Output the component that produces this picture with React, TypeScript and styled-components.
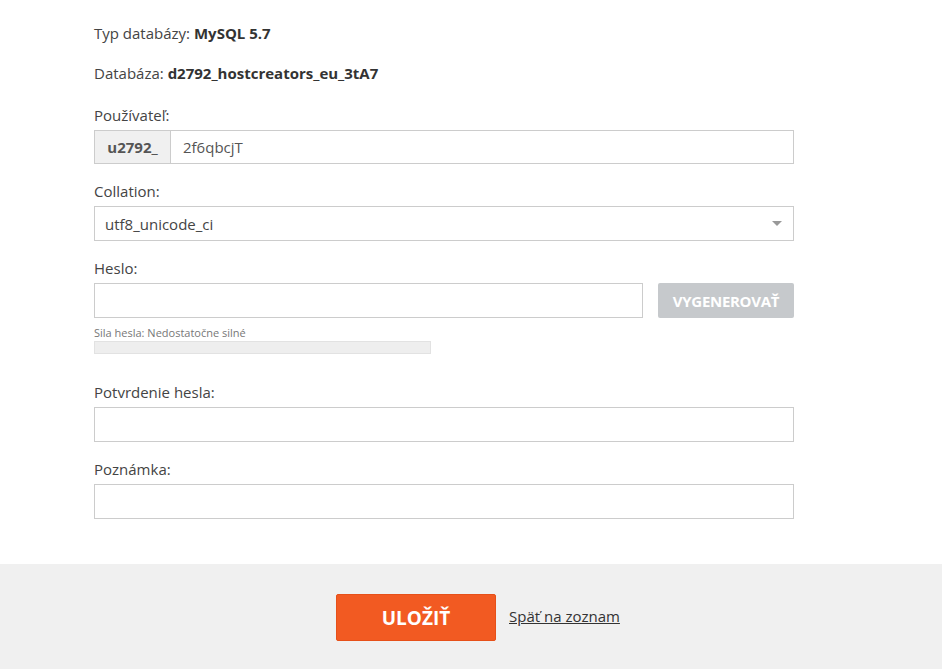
import React from 'react';
import styled, { createGlobalStyle } from 'styled-components';

const GlobalStyle = createGlobalStyle`
  html, body {
    margin: 0;
    padding: 0;
    background: #fff;
    font-family: "Open Sans", "Liberation Sans", sans-serif;
    color: #444;
  }
`;

const Page = styled.div`
  min-height: 669px;
  display: flex;
  flex-direction: column;
`;

const Form = styled.div`
  width: 700px;
  padding: 22px 0 45px 94px;
  display: flex;
  flex-direction: column;
`;

const Info = styled.p<{ $gap?: number }>`
  margin: 0 0 ${(p) => p.$gap ?? 18}px;
  font-size: 15px;
  line-height: 22px;
  color: #444;

  b {
    font-weight: 700;
    color: #333;
  }
`;

const Field = styled.div<{ $gap?: number }>`
  display: flex;
  flex-direction: column;
  margin-bottom: ${(p) => p.$gap ?? 16}px;
`;

const Label = styled.label`
  font-size: 15px;
  line-height: 22px;
  color: #444;
  margin-bottom: 4px;
`;

const InputGroup = styled.div`
  display: flex;
  height: 34px;
  border: 1px solid #ccc;
  box-sizing: border-box;
`;

const Addon = styled.span`
  width: 75px;
  flex: none;
  display: flex;
  align-items: center;
  justify-content: center;
  background: #f0f0f0;
  border-right: 1px solid #ccc;
  font-size: 15px;
  font-weight: 700;
  color: #555;
`;

const Input = styled.input<{ $bare?: boolean }>`
  display: block;
  width: 100%;
  min-width: 0;
  height: ${(p) => (p.$bare ? '100%' : '35px')};
  box-sizing: border-box;
  border: ${(p) => (p.$bare ? 'none' : '1px solid #ccc')};
  padding: 0 12px;
  font-family: inherit;
  font-size: 15px;
  color: #555;
  outline: none;
  background: #fff;
`;

const Select = styled.div`
  height: 35px;
  box-sizing: border-box;
  border: 1px solid #ccc;
  display: flex;
  align-items: center;
  justify-content: space-between;
  padding: 0 10px;
  font-size: 15px;
  color: #444;
`;

const Caret = styled.span`
  width: 0;
  height: 0;
  border-left: 5px solid transparent;
  border-right: 5px solid transparent;
  border-top: 5px solid #999;
  margin-right: 1px;
`;

const Row = styled.div`
  display: flex;
  gap: 15px;
`;

const GenButton = styled.button`
  width: 136px;
  height: 35px;
  flex: none;
  border: none;
  border-radius: 2px;
  background: #c6c9cc;
  color: #fff;
  font-family: inherit;
  font-size: 15px;
  font-weight: 700;
  letter-spacing: -0.3px;
  padding: 0;
  cursor: default;
`;

const Strength = styled.div`
  margin-top: 7px;
  font-size: 11px;
  line-height: 15px;
  color: #777;
`;

const StrengthBar = styled.div`
  width: 337px;
  height: 13px;
  box-sizing: border-box;
  margin-top: 1px;
  background: #eee;
  border: 1px solid #e2e2e2;
`;

const Footer = styled.div`
  flex: 1;
  background: #f0f0f0;
  display: flex;
  align-items: flex-start;
  padding: 30px 0 0 336px;
  gap: 13px;
`;

const SaveButton = styled.button`
  width: 160px;
  height: 47px;
  border: 1px solid #e65019;
  border-radius: 2px;
  background: #f25a22;
  color: #fff;
  font-family: inherit;
  font-size: 19px;
  font-weight: 700;
`;

const BackLink = styled.a`
  margin-top: 11px;
  font-size: 15px;
  line-height: 22px;
  color: #333;
  text-decoration: underline;
`;

export default function App() {
  return (
    <>
      <GlobalStyle />
      <Page>
        <Form>
          <Info>
            Typ databázy: <b>MySQL 5.7</b>
          </Info>
          <Info $gap={20}>
            Databáza: <b>d2792_hostcreators_eu_3tA7</b>
          </Info>
          <Field>
            <Label>Používateľ:</Label>
            <InputGroup>
              <Addon>u2792_</Addon>
              <Input $bare defaultValue="2f6qbcjT" />
            </InputGroup>
          </Field>
          <Field>
            <Label>Collation:</Label>
            <Select>
              utf8_unicode_ci
              <Caret />
            </Select>
          </Field>
          <Field $gap={27}>
            <Label>Heslo:</Label>
            <Row>
              <Input />
              <GenButton>VYGENEROVAŤ</GenButton>
            </Row>
            <Strength>Sila hesla: Nedostatočne silné</Strength>
            <StrengthBar />
          </Field>
          <Field>
            <Label>Potvrdenie hesla:</Label>
            <Input />
          </Field>
          <Field $gap={0}>
            <Label>Poznámka:</Label>
            <Input />
          </Field>
        </Form>
        <Footer>
          <SaveButton>ULOŽIŤ</SaveButton>
          <BackLink href="#">Späť na zoznam</BackLink>
        </Footer>
      </Page>
    </>
  );
}
